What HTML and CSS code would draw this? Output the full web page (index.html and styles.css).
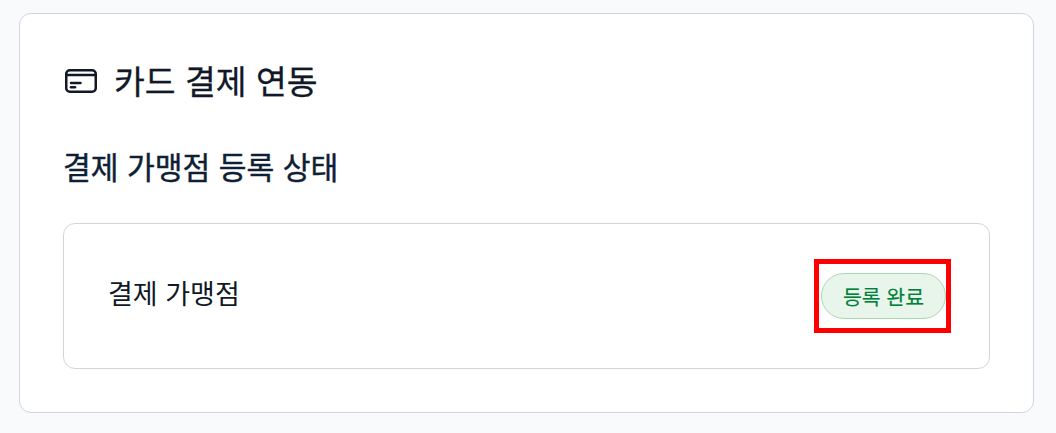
FILE: index.html
```html
<!DOCTYPE html>
<html lang="ko">
<head>
<meta charset="utf-8">
<title>카드 결제 연동</title>
<link rel="stylesheet" href="styles.css">
</head>
<body>
<section class="card">
  <h1 class="title">
    <svg class="icon" viewBox="0 0 32 24" fill="none" stroke="currentColor" stroke-width="2.5" stroke-linecap="round" stroke-linejoin="round">
      <rect x="1.25" y="1.25" width="29.5" height="21.5" rx="3.6"/>
      <path d="M1.25 6H30.75"/>
      <path d="M6 14H15.5"/>
      <path d="M6 18.2H10"/>
    </svg>
    <span class="title-text">카드 결제 연동</span>
  </h1>
  <h2 class="subtitle">결제 가맹점 등록 상태</h2>
  <div class="row">
    <span class="label">결제 가맹점</span>
    <span class="badge-wrap">
      <span class="badge">등록 완료</span>
      <span class="highlight"></span>
    </span>
  </div>
</section>
</body>
</html>
```
FILE: styles.css
```css
* { box-sizing: border-box; }
html, body { margin: 0; height: 100%; }
body {
  background: #f9fafb;
  padding: 13px 22px 20px 19px;
  font-family: "Noto Sans CJK KR", "Noto Sans", sans-serif;
  color: #111827;
  overflow: hidden;
}
.card {
  height: 400px;
  background: #fff;
  border: 1px solid #d1d5db;
  border-radius: 12px;
  padding: 43px;
}
.title {
  margin: 0;
  display: flex;
  align-items: center;
  gap: 17px;
  height: 48px;
  font-size: 33.5px;
  font-weight: 400;
  line-height: 48px;
}
.title-text { position: relative; top: -1px; -webkit-text-stroke: 0.3px currentColor; }
.icon { width: 32px; height: 24px; flex: none; margin-left: 2px; }
.subtitle {
  margin: 41px 0 0;
  font-size: 30.2px;
  font-weight: 400;
  height: 40px;
  line-height: 40px;
  color: #0f1f35;
  -webkit-text-stroke: 0.45px currentColor;
}
.row {
  margin-top: 37px;
  height: 146px;
  display: flex;
  align-items: center;
  justify-content: space-between;
  border: 1px solid #d1d5db;
  border-radius: 12px;
  padding: 0 43px 0 44px;
}
.label { font-size: 27px; font-weight: 400; position: relative; top: -4px; }
.badge-wrap { position: relative; display: flex; }
.badge {
  width: 125px;
  height: 46px;
  display: flex;
  align-items: center;
  justify-content: center;
  font-size: 20.5px;
  font-weight: 400;
  color: #00803a;
  -webkit-text-stroke: 0.15px currentColor;
  background: #e8f5ea;
  border: 1px solid #a9d8b0;
  border-radius: 23px;
}
.highlight {
  position: absolute;
  left: -7px;
  top: -14px;
  width: 137px;
  height: 74px;
  border: 5px solid #ff0000;
}
```
